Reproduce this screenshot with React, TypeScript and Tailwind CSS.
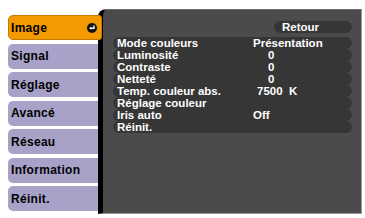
import React from 'react';

const tabs = ['Image', 'Signal', 'Réglage', 'Avancé', 'Réseau', 'Information', 'Réinit.'];

const rows: { label: string; value?: string; pad?: string }[] = [
  { label: 'Mode couleurs', value: 'Présentation', pad: 'pl-0' },
  { label: 'Luminosité', value: '0', pad: 'pl-[15px]' },
  { label: 'Contraste', value: '0', pad: 'pl-[15px]' },
  { label: 'Netteté', value: '0', pad: 'pl-[15px]' },
  { label: 'Temp. couleur abs.', value: '7500  K', pad: 'pl-[4px]' },
  { label: 'Réglage couleur' },
  { label: 'Iris auto', value: 'Off', pad: 'pl-0' },
  { label: 'Réinit.' },
];

function EnterIcon() {
  return (
    <svg width="10" height="10" viewBox="0 0 10 10">
      <circle cx="5" cy="5" r="5" fill="#111" />
      <path d="M7 2.6v2.6H3.4" stroke="#fff" strokeWidth="1.4" fill="none" />
      <path d="M2.2 5.2l2-1.6v3.2z" fill="#fff" />
    </svg>
  );
}

export default function App() {
  return (
    <div
      className="w-[365px] h-[218px] bg-white flex overflow-hidden"
      style={{ fontFamily: '"Liberation Sans", Arial, sans-serif' }}
    >
      <div className="w-[98px] shrink-0 pl-[8px] pt-[15px] flex flex-col gap-[3.5px] relative z-10">
        {tabs.map((t, i) =>
          i === 0 ? (
            <div
              key={t}
              className="h-[25px] w-[94px] rounded-l-[5px] rounded-r-[3px] bg-[#f39a00] border border-[#c97a00] flex items-center justify-between pl-[2px] pr-[4px]"
            >
              <span className="text-[12px] font-bold text-black tracking-[0.3px]">{t}</span>
              <EnterIcon />
            </div>
          ) : (
            <div
              key={t}
              className="h-[25px] w-[90px] rounded-l-[5px] bg-[#a8a2c8] flex items-center pl-[3px]"
            >
              <span className="text-[12px] font-bold text-black tracking-[0.3px]">{t}</span>
            </div>
          )
        )}
      </div>
      <div className="mt-[9px] h-[205px] w-[264px] bg-[#4b4b4b] border-l-[5px] border-l-black border-t border-r border-b border-t-[#6a6a6a] border-r-[#9a9a9a] border-b-[#9a9a9a] rounded-tl-[8px] pt-[11px] pl-[10px] pr-[9px]">
        <div className="flex flex-col text-white font-bold text-[11.5px] leading-[12px]">
          <div className="flex justify-end">
            <div className="w-[78px] h-[12px] rounded-full bg-[#363636] pl-[8px] flex items-center">
              Retour
            </div>
          </div>
          <div className="h-[4px]" />
          {rows.map((r) => (
            <div key={r.label} className="h-[12px] rounded-full bg-[#363636] flex items-center pl-[4px]">
              <span className="w-[136px] shrink-0">{r.label}</span>
              {r.value && <span className={`whitespace-pre ${r.pad}`}>{r.value}</span>}
            </div>
          ))}
        </div>
      </div>
    </div>
  );
}
